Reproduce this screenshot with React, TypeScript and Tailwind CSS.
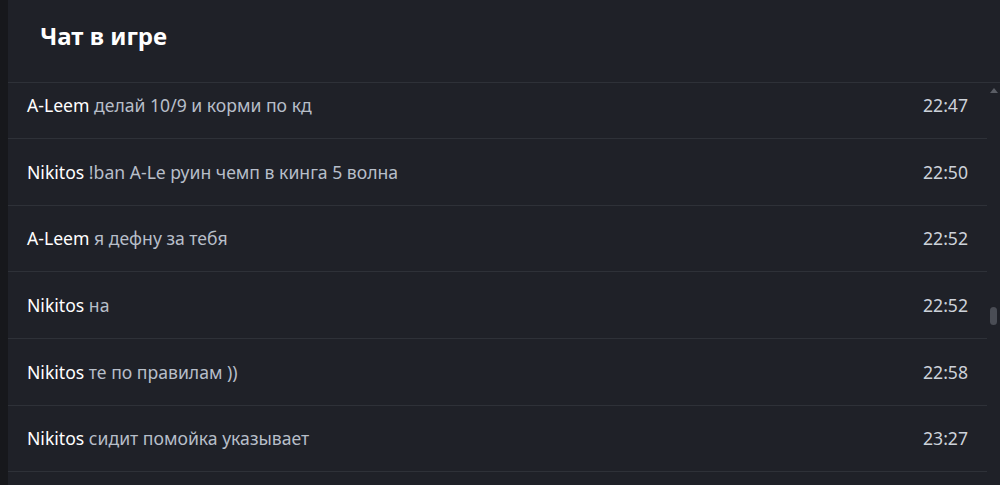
import React from "react";

const rows = [
  { name: "A-Leem", text: "делай 10/9 и корми по кд", time: "22:47", h: "h-[67px]" },
  { name: "Nikitos", text: "!ban A-Le руин чемп в кинга 5 волна", time: "22:50", h: "h-[67px]" },
  { name: "A-Leem", text: "я дефну за тебя", time: "22:52", h: "h-[66px]" },
  { name: "Nikitos", text: "на", time: "22:52", h: "h-[67px]" },
  { name: "Nikitos", text: "те по правилам ))", time: "22:58", h: "h-[67px]" },
  { name: "Nikitos", text: "сидит помойка указывает", time: "23:27", h: "h-[66px]" },
];

export default function App() {
  return (
    <div
      className="w-[1000px] h-[485px] flex bg-[#17181c] overflow-hidden"
      style={{ fontFamily: '"Noto Sans", "Open Sans", sans-serif' }}
    >
      <div className="w-[8px] bg-[#17181c]" />
      <div className="flex-1 flex flex-col bg-[#1f2128]">
        <div className="h-[83px] shrink-0 flex items-center pl-[32px] border-b border-[#2e3138]">
          <h1 className="text-[24px] font-bold text-white leading-none -mt-[10px]">Чат в игре</h1>
        </div>
        <div className="flex-1 flex min-h-0">
          <div className="flex-1 overflow-hidden">
            <div className="-mt-[11px]">
              {rows.map((r, i) => (
                <div
                  key={i}
                  className={`${r.h} flex items-center justify-between pl-[19px] pr-[19px] border-b border-[#2e3138] text-[17.6px]`}
                >
                  <div>
                    <span className="text-white">{r.name}</span>{" "}
                    <span className="text-[#b7bec9]">{r.text}</span>
                  </div>
                  <span className="text-[#cdd2da]">{r.time}</span>
                </div>
              ))}
            </div>
          </div>
          <div className="w-[13px] shrink-0 relative bg-[#1f2128]">
            <svg className="absolute left-[3px] top-[5px]" width="8" height="6" viewBox="0 0 8 6">
              <polygon points="4,0 8,5 0,5" fill="#5a5d65" />
            </svg>
            <div className="absolute left-[3px] top-[224px] w-[7px] h-[18px] rounded-full bg-[#4a4d55]" />
          </div>
        </div>
      </div>
    </div>
  );
}
